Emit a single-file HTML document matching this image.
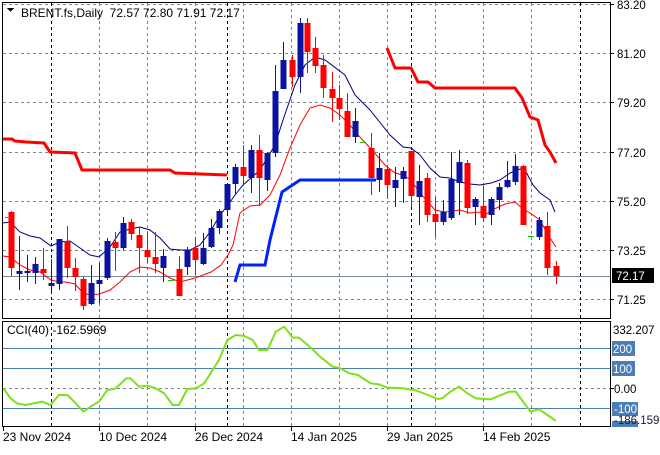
<!DOCTYPE html>
<html><head><meta charset="utf-8"><style>
body{margin:0;background:#fff;width:660px;height:450px;overflow:hidden;font-family:"Liberation Sans",sans-serif}
svg text{font-family:"Liberation Sans",sans-serif;font-size:11.5px;fill:#000;white-space:pre}
</style></head><body>
<svg width="660" height="450" xmlns="http://www.w3.org/2000/svg" shape-rendering="crispEdges">
<g stroke="#778899" stroke-dasharray="3,3" stroke-width="1">
<line x1="3" y1="4.5" x2="610" y2="4.5"/><line x1="3" y1="53.5" x2="610" y2="53.5"/><line x1="3" y1="102.5" x2="610" y2="102.5"/><line x1="3" y1="152.5" x2="610" y2="152.5"/><line x1="3" y1="201.5" x2="610" y2="201.5"/><line x1="3" y1="250.5" x2="610" y2="250.5"/><line x1="3" y1="299.5" x2="610" y2="299.5"/>
<line x1="3" y1="388.5" x2="610" y2="388.5"/>
<line x1="99.5" y1="3" x2="99.5" y2="426"/><line x1="147.5" y1="3" x2="147.5" y2="426"/><line x1="195.5" y1="3" x2="195.5" y2="426"/><line x1="243.5" y1="3" x2="243.5" y2="426"/><line x1="291.5" y1="3" x2="291.5" y2="426"/><line x1="339.5" y1="3" x2="339.5" y2="426"/><line x1="387.5" y1="3" x2="387.5" y2="426"/><line x1="435.5" y1="3" x2="435.5" y2="426"/><line x1="483.5" y1="3" x2="483.5" y2="426"/><line x1="531.5" y1="3" x2="531.5" y2="426"/>
</g>
<g stroke="#000" stroke-dasharray="3,3">
<line x1="51.5" y1="3" x2="51.5" y2="426"/><line x1="227.5" y1="3" x2="227.5" y2="426"/><line x1="411.5" y1="3" x2="411.5" y2="426"/><line x1="580.5" y1="3" x2="580.5" y2="426"/>
</g>
<line x1="3" y1="276.5" x2="610" y2="276.5" stroke="#778899"/>
<g stroke="#4a7eb5"><line x1="3" y1="348.5" x2="610" y2="348.5"/><line x1="3" y1="368.5" x2="610" y2="368.5"/><line x1="3" y1="408.5" x2="610" y2="408.5"/></g>
<g fill="none" shape-rendering="auto">
<polyline stroke="#ff0000" stroke-width="3" points="3,139 12,139 15,141 26,142 44,143 50,152 75,153 82,170 170,170 175,173 227,175"/>
<polyline stroke="#ff0000" stroke-width="3" points="387,48 395,68 411,68 418,82 428,82 435,88 515,88 522,98 530,117 538,120 545,145 550,152 556,163"/>
<polyline stroke="#0022ff" stroke-width="3" points="235,282 240,265 265,265 270,240 282,192 300,180 376,180"/>
<polyline stroke="#000080" stroke-width="1" points="3,223 10,222 20,232 30,236 40,238 51,246 60,242 70,241 80,248 90,255 99,257 110,247 120,232 130,229 140,227 150,230 160,238 170,249 180,250 190,250 200,245 210,232 220,215 228,205 235,195 243,185 260,170 275,145 283,120 295,85 305,65 315,57 325,60 345,75 355,95 370,110 390,135 403,147 411,148 420,155 430,168 440,177 450,178 460,182 470,184 480,185 491,183 500,180 510,173 520,169 525,170 533,185 540,193 550,200 555,212"/>
<polyline stroke="#ff0000" stroke-width="1" points="3,256 10,257 20,265 30,270 40,272 51,280 60,282 66,282 75,284 83,293 90,295 99,294 110,290 120,282 130,272 140,267 150,268 160,272 170,278 180,282 195,278 203,275 211,272 221,265 228,255 233,245 240,213 250,206 260,205 270,195 280,175 290,148 300,125 310,108 320,105 330,108 340,115 350,125 358,135 372,150 385,165 395,173 403,175 411,180 420,193 435,210 445,212 460,210 470,213 480,212 485,215 492,210 505,204 515,202 522,208 530,213 540,220 548,235 556,247"/>
</g>
<g id="c"></g>
<g stroke="#00cc00" stroke-width="1"><line x1="5" y1="217.5" x2="10" y2="217.5"/><line x1="168" y1="280.5" x2="174" y2="280.5"/><line x1="360" y1="142.5" x2="366" y2="142.5"/><line x1="528" y1="236.5" x2="534" y2="236.5"/></g>
<g transform="translate(0,225) scale(0.42105,0.33333)" fill="none" shape-rendering="auto">
<polyline vector-effect="non-scaling-stroke" stroke="#7fe01a" stroke-width="2" points="8,490 25,520 40,535 60,540 80,535 100,530 120,540 140,510 160,510 180,535 198,560 215,545 235,530 255,495 275,490 300,460 310,460 330,485 350,482 370,490 390,505 410,540 425,540 445,492 465,490 485,475 500,445 520,405 540,345 560,330 580,333 600,345 615,375 635,375 655,320 675,305 695,338 710,338 740,370 760,395 790,425 805,428 830,445 850,450 880,475 900,478 920,488 960,490 990,497 1010,507 1040,522 1050,520 1070,500 1090,485 1110,505 1130,520 1165,523 1190,510 1210,500 1225,500 1245,535 1260,560 1280,553 1300,570 1320,588"/>
</g>
<g fill="none" stroke="#000"><rect x="2.5" y="2.5" width="608" height="316"/><rect x="2.5" y="321.5" width="608" height="105"/></g>
<g stroke="#000"><line x1="611" y1="4.5" x2="614" y2="4.5"/><line x1="611" y1="53.5" x2="614" y2="53.5"/><line x1="611" y1="102.5" x2="614" y2="102.5"/><line x1="611" y1="152.5" x2="614" y2="152.5"/><line x1="611" y1="201.5" x2="614" y2="201.5"/><line x1="611" y1="250.5" x2="614" y2="250.5"/><line x1="611" y1="299.5" x2="614" y2="299.5"/><line x1="611" y1="388.5" x2="614" y2="388.5"/></g>
<g>
<text x="617" y="9">83.20</text><text x="617" y="58">81.20</text><text x="617" y="107">79.20</text><text x="617" y="157">77.20</text><text x="617" y="206">75.20</text><text x="617" y="255">73.25</text><text x="617" y="304">71.25</text>
<rect x="612" y="268" width="42" height="15" fill="#000"/><text x="616" y="280" style="fill:#fff">72.17</text>
<text x="613" y="334">332.207</text>
<rect x="612" y="341" width="23" height="15" fill="#4a7eb5"/><text x="613" y="353" style="fill:#fff">200</text>
<rect x="612" y="361" width="23" height="15" fill="#4a7eb5"/><text x="613" y="373" style="fill:#fff">100</text>
<text x="614" y="393">0.00</text>
<rect x="612" y="402" width="26" height="14" fill="#4a7eb5"/><text x="614" y="413" style="fill:#fff">-100</text>
<rect x="612" y="421" width="26" height="6" fill="#4a7eb5"/>
<text x="614" y="424" style="fill:#1a1a40">-186.159</text>
<text x="7" y="334" style="font-size:12px">CCI(40) -162.5969</text>
<path d="M7 8 L14 8 L10.5 12 Z" fill="#000"/>
<text x="21" y="17" style="font-size:12px">BRENT.fs,Daily  72.57 72.80 71.91 72.17</text>
<g style="font-size:12px"><text x="3" y="441" style="font-size:12px">23 Nov 2024</text><text x="99" y="441" style="font-size:12px">10 Dec 2024</text><text x="195" y="441" style="font-size:12px">26 Dec 2024</text><text x="291" y="441" style="font-size:12px">14 Jan 2025</text><text x="387" y="441" style="font-size:12px">29 Jan 2025</text><text x="483" y="441" style="font-size:12px">14 Feb 2025</text></g>
</g>
<g stroke="#000"><line x1="3.5" y1="427" x2="3.5" y2="431"/><line x1="99.5" y1="427" x2="99.5" y2="431"/><line x1="195.5" y1="427" x2="195.5" y2="431"/><line x1="291.5" y1="427" x2="291.5" y2="431"/><line x1="387.5" y1="427" x2="387.5" y2="431"/><line x1="483.5" y1="427" x2="483.5" y2="431"/></g>
</svg>
<script>
var d=[[11,0,212,268,211,276],[19,1,271,274,236,290],[27,1,271,273,255,282],[35,1,264,273,257,284],[43,0,269,273,248,280],[51,1,283,286,259,294],[59,1,239,284,239,290],[67,0,241,268,226,278],[75,0,268,277,258,291],[83,0,279,306,277,310],[91,1,283,304,265,305],[99,1,280,284,263,303],[107,1,241,278,238,280],[115,0,242,248,232,271],[123,1,223,248,217,250],[131,0,222,234,219,240],[139,0,235,248,227,273],[147,0,250,257,232,263],[155,0,257,264,232,273],[163,1,256,268,249,282],[179,0,269,296,256,296],[187,1,250,267,247,275],[195,0,248,260,237,275],[203,1,248,264,233,265],[211,1,228,247,219,248],[219,1,211,228,209,234],[227,1,184,210,183,214],[235,1,167,184,164,195],[243,0,167,176,145,185],[251,1,150,178,145,193],[259,0,150,178,135,206],[267,1,153,180,152,191],[275,1,91,153,65,157],[283,1,60,89,42,89],[292,0,60,77,55,87],[300,1,23,77,18,93],[307,0,23,52,18,73],[315,0,48,66,37,73],[323,0,65,88,55,98],[332,0,89,98,72,122],[339,0,98,109,85,120],[347,0,111,137,93,137],[355,1,121,137,108,143],[371,0,148,178,133,195],[379,1,168,180,153,192],[387,0,169,185,165,199],[395,1,180,188,167,207],[403,1,171,179,167,203],[411,0,151,196,151,207],[419,1,181,197,165,225],[427,0,178,215,173,222],[435,0,214,222,197,237],[443,1,212,222,200,225],[451,1,179,218,152,220],[459,1,162,183,150,215],[467,0,163,208,160,214],[475,1,199,207,197,225],[483,0,206,218,186,222],[491,1,199,215,197,225],[499,1,187,200,183,210],[507,1,180,187,161,188],[515,1,166,182,154,185],[523,0,166,225,165,225],[539,1,220,237,217,240],[547,0,226,268,212,275],[556,0,266,276,261,284]];
var s='';d.forEach(function(c){var col=c[1]?'#0a14a0':'#ff0000';s+='<line x1="'+(c[0]+0.5)+'" y1="'+c[4]+'" x2="'+(c[0]+0.5)+'" y2="'+c[5]+'" stroke="'+col+'"/><rect x="'+(c[0]-2.5)+'" y="'+c[2]+'" width="6" height="'+Math.max(1,c[3]-c[2])+'" fill="'+col+'"/>';});
document.getElementById('c').innerHTML=s;
</script>
</body></html>
